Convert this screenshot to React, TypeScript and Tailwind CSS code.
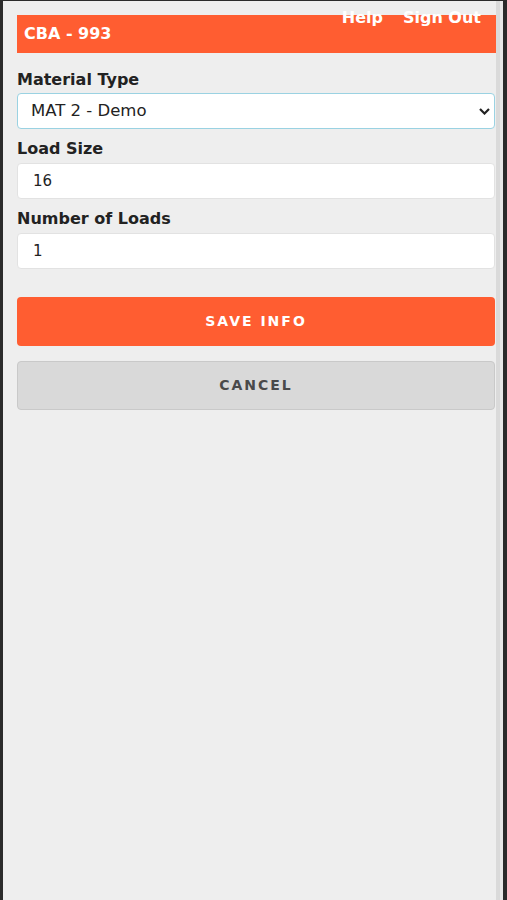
import React from 'react'

export default function App() {
    return (
        <div className="flex h-[900px] w-[507px] bg-[#2b2b2b] pt-px font-['DejaVu_Sans',sans-serif]">
            <div className="w-[3px]" />
            <div className="relative flex-1 bg-[#eeeeee] pl-[14px] pt-[14px]">
                {/* Header bar */}
                <div className="flex h-[38px] items-center bg-[#ff5d31] pl-[7px]">
                    <span className="text-[16px] font-bold text-white">CBA - 993</span>
                </div>
                <div className="absolute right-[15px] top-[8px] flex gap-[20px] text-[16px] font-bold leading-[18px] text-white">
                    <a href="#">Help</a>
                    <a href="#">Sign Out</a>
                </div>

                {/* Form */}
                <div className="mt-[17px] flex flex-col">
                    <label className="text-[16px] font-bold leading-[20px] text-[#222]">Material Type</label>
                    <div className="relative mt-[3px]">
                        <select
                            defaultValue="mat2"
                            className="h-[36px] w-[478px] appearance-none rounded-[4px] border border-[#9ad2e2] bg-white pl-[13px] text-[16.5px] text-[#222] outline-none"
                        >
                            <option value="mat2">MAT 2 - Demo</option>
                        </select>
                        <svg className="pointer-events-none absolute right-[6px] top-[15px]" width="11" height="7" viewBox="0 0 11 7">
                            <path d="M1 1l4.5 4.5L10 1" fill="none" stroke="#222" strokeWidth="2.2" />
                        </svg>
                    </div>

                    <label className="mt-[10px] text-[16px] font-bold leading-[20px] text-[#222]">Load Size</label>
                    <input
                        defaultValue="16"
                        className="mt-[4px] h-[36px] w-[478px] rounded-[4px] border border-[#e2e2e2] bg-white pl-[15px] text-[15px] text-[#222] outline-none"
                    />

                    <label className="mt-[10px] text-[16px] font-bold leading-[20px] text-[#222]">Number of Loads</label>
                    <input
                        defaultValue="1"
                        className="mt-[4px] h-[36px] w-[478px] rounded-[4px] border border-[#e2e2e2] bg-white pl-[15px] text-[15px] text-[#222] outline-none"
                    />

                    <button
                        type="button"
                        className="mt-[28px] h-[49px] w-[478px] rounded-[4px] bg-[#ff5d31] text-[14px] font-bold tracking-[2px] text-white"
                    >
                        SAVE INFO
                    </button>
                    <button
                        type="button"
                        className="mt-[15px] h-[49px] w-[478px] rounded-[4px] border border-[#c9c9c9] bg-[#d9d9d9] text-[14px] font-bold tracking-[2px] text-[#4a4a4a]"
                    >
                        CANCEL
                    </button>
                </div>
            </div>
            {/* scrollbar edge */}
            <div className="w-[4px] bg-[#dadada]" />
            <div className="w-[3px] bg-[#e8e8e8]" />
            <div className="w-[4px]" />
        </div>
    )
}
